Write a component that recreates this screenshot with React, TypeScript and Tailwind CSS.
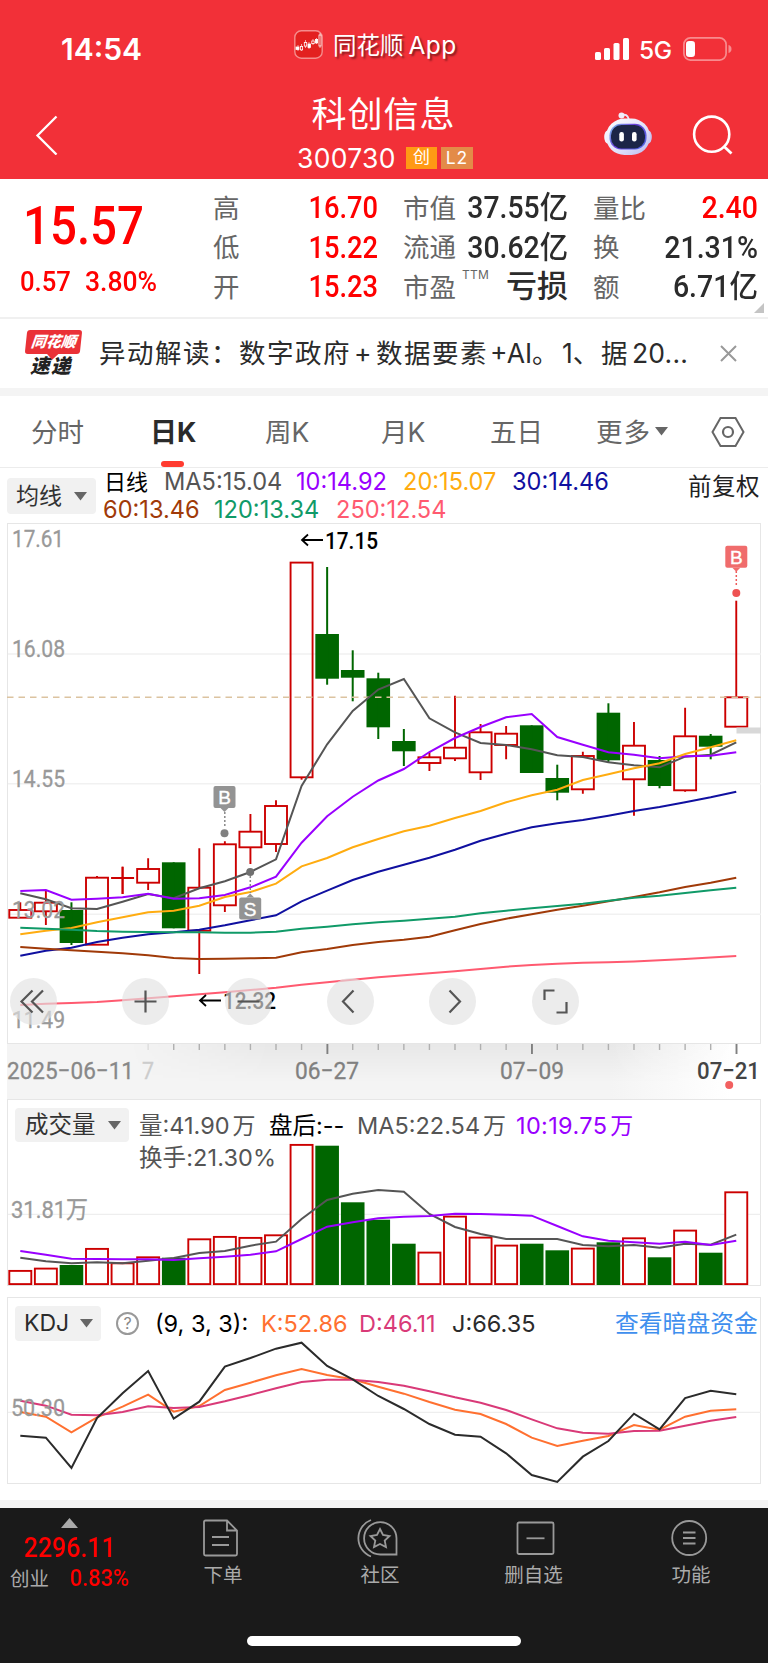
import React from "react";

const RED = "#cc0000";
const GREEN = "#006600";
const ui = "font-['Inter','Noto_Sans_CJK_SC',sans-serif]";
const num = "font-['Roboto','Noto_Sans_CJK_SC',sans-serif]";
const SVG_NUM = "Roboto, 'Noto Sans CJK SC', sans-serif";

const STEP = 25.57;
const cx = (i: number) => 20.3 + STEP * i;

/* colour, body top, body bottom, wick top, wick bottom */
type Candle = ["r" | "g", number, number, number, number];
const candles: Candle[] = [
  ["r", 910, 917.7, 902.3, 917.7],
  ["r", 902.7, 911.3, 890, 925],
  ["g", 910, 943, 902.3, 945],
  ["r", 877.7, 944.7, 876, 944.7],
  ["r", 878, 878, 866.7, 894],
  ["r", 869, 882.7, 858.3, 890],
  ["g", 862.3, 928.3, 862.3, 928.3],
  ["r", 887.7, 930.7, 848.3, 974],
  ["r", 844.3, 905.3, 841.3, 912],
  ["r", 831.7, 847.3, 814, 864],
  ["r", 806, 844, 800.3, 852],
  ["r", 562.6, 777.3, 562.6, 779.7],
  ["g", 634, 678.7, 567, 684.7],
  ["g", 670, 677.7, 650.3, 701.3],
  ["g", 678.3, 727.3, 672.7, 739],
  ["g", 741, 751.3, 729, 766],
  ["r", 757.3, 763, 752.3, 771],
  ["r", 747.7, 758.3, 695.7, 761],
  ["r", 732.3, 772.3, 724, 780],
  ["r", 733.7, 745, 726, 759.3],
  ["g", 725.3, 773, 725.3, 773],
  ["g", 778, 792.7, 764.7, 800.3],
  ["r", 756, 789.3, 751.7, 793.7],
  ["g", 712.7, 760.3, 703.3, 763],
  ["r", 745.7, 779.3, 722, 815.7],
  ["g", 760, 786, 756, 788.3],
  ["r", 736.3, 790.3, 707.7, 791.7],
  ["g", 735.7, 746.7, 734, 759.3],
  ["r", 697.3, 726.7, 600.7, 726.7],
];

const averages: { color: string; y: number[] }[] = [
  { color: "#555555", y: [893.3, 899.3, 908.3, 909, 901.7, 894, 898.3, 888.3, 881.3, 872, 859.3, 786, 744.3, 711, 689.5, 679, 718.3, 732.3, 743, 745, 749.3, 755.3, 757, 762.3, 765.3, 767.3, 756.7, 754.7, 742.3] },
  { color: "#9900ff", y: [891, 890, 899.7, 898.7, 897.3, 893.7, 898.7, 898.3, 895, 887.3, 876.7, 842.7, 816.3, 796.7, 780.5, 769, 752, 738, 727, 717.3, 714, 737, 744.7, 752.3, 754.7, 758.3, 756.3, 755.7, 752.3] },
  { color: "#ffac10", y: [934.3, 930.7, 928, 922.3, 917.3, 912.3, 910.7, 905.7, 897, 892, 883.7, 866.3, 858, 847.3, 839, 831.3, 825.7, 818, 811, 802.3, 795.3, 789.7, 780, 774.3, 768.3, 763.3, 754, 747.3, 740.3] },
  { color: "#1010a0", y: [955.7, 950.7, 947.7, 942, 937.7, 934.3, 932.3, 929.7, 925.3, 920.3, 915.3, 901.3, 890.7, 880, 871.7, 864.7, 857.7, 849.7, 840.7, 833.7, 827.3, 823.3, 820, 815.7, 811, 807, 802.3, 797.3, 791.7] },
  { color: "#a03a08", y: [947, 948.7, 950.3, 951.7, 953.3, 955.3, 958, 959, 958.7, 958.3, 957.7, 952.3, 949, 945, 942, 939.7, 936.7, 930.3, 924, 918.7, 914.3, 909.7, 905.7, 901.3, 897, 892.3, 887, 882.7, 877.7] },
  { color: "#109a68", y: [927.7, 928.7, 929.7, 931, 931.7, 932, 932.3, 932.3, 932.7, 932.7, 931.7, 928.7, 926.7, 924.3, 922.3, 920.7, 918.7, 916.7, 913.3, 910.7, 908.3, 906, 903.7, 900.7, 897.7, 895.7, 893, 890.3, 887.7] },
  { color: "#ff5a70", y: [1005, 1003.8, 1003, 1002, 1000.2, 998.3, 996.3, 994.3, 992.2, 990, 987.7, 984.8, 982.3, 979.8, 977.3, 975.3, 973.3, 971.3, 969, 966.7, 965, 963.8, 962.7, 962.3, 961.5, 960.3, 959, 957.5, 956] },
];

const volumes: ["r" | "g", number][] = [
  ["r", 1270.3], ["r", 1268], ["g", 1265], ["r", 1248.3], ["r", 1262.7], ["r", 1256.7], ["g", 1257.7], ["r", 1238.7],
  ["r", 1236.3], ["r", 1237.3], ["r", 1234.7], ["r", 1144.3], ["g", 1145.7], ["g", 1202.3], ["g", 1219.7], ["g", 1243.7],
  ["r", 1252], ["r", 1216], ["r", 1237], ["r", 1245], ["g", 1243.7], ["g", 1250.3], ["r", 1248], ["g", 1242.3],
  ["r", 1237.7], ["g", 1257.3], ["r", 1230], ["g", 1252.7], ["r", 1191.7],
];
const volMa5 = [503, 514, 520, 517, 520, 512, 504, 489, 483, 467, 455, 387, 330, 311, 300, 305, 372, 411, 432, 447, 447, 447, 465, 469, 465, 473, 461, 464, 434];
const volMa10 = [483, 494, 506, 507, 508, 508, 510, 505, 500, 494, 484, 447, 410, 397, 385, 380, 378, 371, 372, 374, 377, 408, 439, 452, 457, 461, 455, 465, 452];

const kLine = [366, 380, 427, 382, 350, 314, 365, 348, 300, 278, 256, 237, 255, 268, 290, 311, 336, 359, 372, 402, 443, 468, 452, 438, 405, 419, 380, 362, 358];
const dLine = [332, 347, 374, 376, 366, 349, 354, 351, 334, 315, 295, 276, 269, 269, 276, 287, 304, 322, 338, 360, 388, 415, 428, 431, 423, 422, 407, 392, 381];
const jLine = [437, 443, 534, 384, 310, 243, 386, 335, 230, 204, 176, 158, 228, 268, 318, 357, 402, 434, 440, 490, 555, 576, 500, 453, 371, 418, 324, 302, 313];

/* series stored in thirds of a pixel below an origin */
const thirds = (origin: number, v: number[]) => v.map((n) => origin + n / 3);

function Line({ y, color, w = 2 }: { y: number[]; color: string; w?: number }) {
  return <polyline points={y.map((v, i) => `${cx(i)},${v}`).join(" ")} fill="none" stroke={color} strokeWidth={w} />;
}

function Label({ x, y, w, children, fill = "#999", weight = 400, size = 24 }: { x: number; y: number; w: number; children: string; fill?: string; weight?: number; size?: number }) {
  return (
    <text x={x} y={y} textLength={w} lengthAdjust="spacingAndGlyphs" fontFamily={SVG_NUM} fontSize={size} fontWeight={weight} fill={fill} stroke={fill} strokeWidth={weight > 400 ? 0 : 0.3}>
      {children}
    </text>
  );
}

function Flag({ x, y, letter, color, up }: { x: number; y: number; letter: string; color: string; up?: boolean }) {
  return (
    <g>
      <rect x={x - 11} y={y} width="22" height="22" rx="2" fill={color} />
      <path d={up ? `M${x - 4} ${y}L${x} ${y - 4}L${x + 4} ${y}Z` : `M${x - 4} ${y + 22}L${x} ${y + 26}L${x + 4} ${y + 22}Z`} fill={color} />
      <text x={x} y={y + 18} textAnchor="middle" fontFamily="Liberation Sans, sans-serif" fontSize="19" fill="#fff" stroke="#fff" strokeWidth="0.4">
        {letter}
      </text>
    </g>
  );
}

function Caret() {
  return (
    <svg width="13" height="9" viewBox="0 0 13 9" className="shrink-0">
      <path d="M0 0H13L6.5 8.6Z" fill="#666" />
    </svg>
  );
}

function StatusBar() {
  return (
    <div className="flex h-[90px] items-start text-white">
      <div className={`${ui} ml-[61px] mt-[31px] w-[233px] text-[30px] font-semibold leading-9`}>14:54</div>
      <svg className="mt-[30px]" width="29" height="29" viewBox="0 0 29 29">
        <rect x="0.8" y="0.8" width="27.4" height="27.4" rx="6.5" fill="#e3201f" stroke="#f58c8c" strokeWidth="1.4" />
        <g stroke="#fff" strokeWidth="0.8">
          <path d="M4 15V21M7.5 14V21M11.5 10V18M15 12V19M19 9V15M22.5 8V14M26 3V18" strokeWidth="0.6" />
          <rect x="2" y="17" width="3" height="2.5" fill="#fff" />
          <rect x="6.4" y="16.5" width="2.2" height="3.4" fill="#e3201f" />
          <rect x="10.3" y="12.5" width="2.4" height="3.6" fill="#e3201f" />
          <rect x="14" y="14" width="2.4" height="3.4" fill="#fff" />
          <rect x="17.8" y="11" width="2.4" height="2.6" fill="#e3201f" />
          <rect x="21.4" y="9.5" width="2.2" height="3.4" fill="#fff" />
          <rect x="25" y="5" width="2" height="11" fill="#e3201f" />
        </g>
      </svg>
      <div className={`${ui} ml-[10px] mt-[29px] flex w-[262px] items-baseline whitespace-nowrap text-[23.5px] leading-8 [text-shadow:2px_2px_2px_rgba(0,0,0,0.45)]`}>
        同花顺<span className="ml-[5px] text-[24.5px] tracking-[0.4px]">App</span>
      </div>
      <svg className="mt-[38px]" width="34" height="22" viewBox="0 0 34 22" fill="#fff">
        <rect x="0" y="14" width="6" height="8" rx="1.6" />
        <rect x="9" y="10" width="6" height="12" rx="1.6" />
        <rect x="18.5" y="5" width="6" height="17" rx="1.6" />
        <rect x="28" y="0" width="6" height="22" rx="1.6" />
      </svg>
      <div className={`${ui} ml-[10px] mt-[34px] w-[44px] text-[24.5px] font-medium leading-8 tracking-[-0.5px]`}>5G</div>
      <svg className="mt-[37px]" width="49" height="24" viewBox="0 0 49 24">
        <rect x="0.9" y="0.9" width="42.2" height="22.2" rx="6.5" fill="none" stroke="#f88b8e" strokeWidth="1.7" />
        <rect x="3" y="4" width="9" height="16" rx="3.2" fill="#fff" />
        <path d="M45.5 8C49.5 8.5 49.5 15.5 45.5 16Z" fill="#f88b8e" />
      </svg>
    </div>
  );
}

function TitleBar() {
  return (
    <div className="flex h-[89px] items-start text-white">
      <svg className="ml-[35px] mt-[25px]" width="24" height="40" viewBox="0 0 24 40">
        <path d="M21.5 1.5L2.5 20.5L21.5 39.5" fill="none" stroke="#fff" strokeWidth="2.3" />
      </svg>
      <div className="ml-[220px] flex w-[220px] flex-col items-center">
        <div className={`${ui} -ml-[11px] whitespace-nowrap text-[35px] leading-[48px] tracking-[1px]`}>科创信息</div>
        <div className="flex h-[26px] w-full items-center pl-[18px] pt-[13px]">
          <span className={`${ui} w-[109px] text-[26.5px] leading-[26px] tracking-[0.3px]`}>300730</span>
          <span className={`${ui} mr-1 flex h-[22px] w-[31px] items-center justify-center bg-[#ff9914] text-[17px] leading-none`}>创</span>
          <span className={`${ui} flex h-[22px] w-8 items-center justify-center bg-[#e38b48] text-[17.5px] leading-none tracking-[1px]`}>L2</span>
        </div>
      </div>
      <svg className="ml-[105px] mt-[21px]" width="48" height="46" viewBox="0 0 48 46">
        <defs>
          <linearGradient id="shell" x1="0" y1="0" x2="1" y2="1">
            <stop offset="0" stopColor="#ffffff" />
            <stop offset="0.6" stopColor="#dfe0fa" />
            <stop offset="1" stopColor="#b9b8ee" />
          </linearGradient>
          <linearGradient id="visor" x1="0" y1="0" x2="1" y2="0.6">
            <stop offset="0" stopColor="#7fc8f0" />
            <stop offset="0.5" stopColor="#6a3fd8" />
            <stop offset="1" stopColor="#5560e0" />
          </linearGradient>
        </defs>
        <path d="M17 4.5C21 2.5 24 4 25 9" fill="none" stroke="#e9e6fa" strokeWidth="2" />
        <circle cx="17.5" cy="4.5" r="3" fill="#f1eefb" />
        <ellipse cx="3.5" cy="26" rx="3.3" ry="6.5" fill="#f5f2fd" />
        <ellipse cx="44.5" cy="26" rx="3.3" ry="6.5" fill="#c9c6f2" />
        <rect x="2" y="7.5" width="44" height="36.5" rx="18.5" fill="url(#shell)" />
        <rect x="5.5" y="12.8" width="37" height="25.6" rx="11.5" fill="url(#visor)" />
        <rect x="7" y="14" width="34" height="23.4" rx="10.5" fill="#1c2547" />
        <rect x="15.3" y="21" width="4.6" height="9.5" rx="2.2" fill="#fff" />
        <rect x="28" y="21" width="4.6" height="9.5" rx="2.2" fill="#fff" />
      </svg>
      <svg className="ml-[40px] mt-[25px]" width="42" height="42" viewBox="0 0 42 42">
        <circle cx="19.7" cy="19.2" r="17.6" fill="none" stroke="#fff" strokeWidth="2.6" />
        <path d="M31.5 31L39.5 38.5" stroke="#fff" strokeWidth="2.8" />
      </svg>
    </div>
  );
}

function Quote() {
  const rows = [
    { a: "高", av: "16.70", b: "市值", bv: "37.55亿", c: "量比", cv: "2.40", red: true },
    { a: "低", av: "15.22", b: "流通", bv: "30.62亿", c: "换", cv: "21.31%", red: false },
    { a: "开", av: "15.23", b: "市盈", bv: "亏损", c: "额", cv: "6.71亿", red: false },
  ];
  const label = `${ui} whitespace-nowrap text-[26.5px] leading-none text-[#666]`;
  const value = `${num} origin-right whitespace-nowrap text-right text-[31px] font-medium leading-none`;
  return (
    <section className="relative flex h-[138px] bg-white">
      <div className={`${num} w-[213px] font-medium text-[#ff0000]`}>
        <div className="ml-[23px] mt-[14px] w-[150px] origin-left scale-x-[0.87] text-[54.5px] leading-[64px]">15.57</div>
        <div className="ml-[20px] mt-[9px] flex text-[28.5px] leading-8">
          <span className="w-[65px] origin-left scale-x-[0.9]">0.57</span>
          <span className="origin-left scale-x-[0.93]">3.80%</span>
        </div>
      </div>
      <div className="w-[546px] pt-[9px]">
        {rows.map((r) => (
          <div key={r.a} className="flex h-[39.5px] items-center">
            <span className={`${label} w-[74px]`}>{r.a}</span>
            <span className={`${value} w-[91px] scale-x-[0.88] text-[#ff0000]`}>{r.av}</span>
            <span className={`${label} ml-[25px] flex w-[50px]`}>
              {r.b}
              {r.b === "市盈" && <span className="-mt-[5px] ml-[6px] text-[12px] leading-none tracking-[0.3px]">TTM</span>}
            </span>
            <span className={`${value} w-[115px] text-[#2b2b2b] ${r.bv === "亏损" ? "scale-x-100" : "scale-x-[0.915]"}`}>{r.bv}</span>
            <span className={`${label} ml-[25px] w-[54px]`}>{r.c}</span>
            <span className={`${value} w-[111px] scale-x-[0.92] ${r.red ? "text-[#ff0000]" : "text-[#2b2b2b]"}`}>{r.cv}</span>
          </div>
        ))}
      </div>
      <svg className="absolute bottom-[4px] right-[4px]" width="10" height="10" viewBox="0 0 10 10">
        <path d="M10 0V10H0Z" fill="#c4c4c4" />
      </svg>
    </section>
  );
}

function News() {
  return (
    <section className="flex h-[71px] items-center border-t-2 border-[#f0f0f0] bg-white">
      <div className={`${ui} ml-[24px] mt-[1px] w-[75px]`}>
        <div className="relative ml-0.5 h-6 w-[55px] -skew-x-6 rounded-[3px] bg-[#ea3137] text-center text-[15px] font-black italic leading-[23px] text-white">
          同花顺
          <span className="absolute left-[24px] top-[20px] h-2 w-2 rotate-45 bg-[#ea3137]" />
        </div>
        <div className="ml-[6px] mt-[1px] text-[19.5px] font-black italic leading-[23px] tracking-[1.5px] text-[#222]">速递</div>
      </div>
      <div className={`${ui} -mt-[1px] flex w-[619px] whitespace-nowrap text-[26.5px] leading-none tracking-[1.5px] text-[#2b2b2b]`}>
        <span className="w-[140px]">异动解读：</span>
        <span className="w-[115px]">数字政府</span>
        <span className="w-[22px]">+</span>
        <span className="w-[114px]">数据要素</span>
        <span className="w-[72px] tracking-[0px]">+AI。</span>
        <span className="w-[39px] tracking-[0px]">1、</span>
        <span className="w-[31px]">据</span>
        <span className="tracking-[0.2px]">20...</span>
      </div>
      <svg className="-mt-[1px] ml-[2px]" width="17" height="17" viewBox="0 0 17 17">
        <path d="M1 1L16 16M16 1L1 16" stroke="#999" strokeWidth="2" />
      </svg>
    </section>
  );
}

function Tabs() {
  const tab = `${ui} whitespace-nowrap text-[26.5px] leading-none text-[#666] pt-[2px]`;
  return (
    <nav className="flex h-[72px] items-center border-b border-[#ececec] bg-white">
      <span className={`${tab} ml-[31px] w-[119px]`}>分时</span>
      <span className={`${ui} relative flex h-full w-[115px] items-center whitespace-nowrap pt-[2px] text-[27px] font-bold leading-none text-[#2b2b2b]`}>
        日K
        <span className="absolute bottom-0 left-[11px] h-[6px] w-[23px] rounded-[3px] bg-[#ff3b30]" />
      </span>
      <span className={`${tab} w-[116px]`}>周K</span>
      <span className={`${tab} w-[109px]`}>月K</span>
      <span className={`${tab} w-[106px]`}>五日</span>
      <span className={`${tab} w-[59px] tracking-[1px]`}>更多</span>
      <Caret />
      <svg className="ml-[43px]" width="34" height="32" viewBox="0 0 34 32" fill="none" stroke="#666" strokeWidth="2">
        <path d="M9.5 2H24.5L32.5 16L24.5 30H9.5L1.5 16Z" />
        <circle cx="17" cy="16" r="5" strokeWidth="2.2" />
      </svg>
    </nav>
  );
}

function AverageLegend() {
  return (
    <div className={`${ui} flex h-[55px] bg-white text-[23.6px] leading-[26px]`}>
      <div className="ml-[7px] mt-[10px] flex h-[36px] w-[89px] items-center rounded-[4px] bg-[#f1f1f1] pl-[9px] text-[23px] text-[#333]">
        <span className="w-[58px]">均线</span>
        <Caret />
      </div>
      <div className="ml-[7px] w-[581px] pt-[1px]">
        <div className="flex h-[27.5px] whitespace-nowrap">
          <span className="ml-[1px] w-[60px] text-[22px] text-black">日线</span>
          <span className="w-[132px] text-[#555]">MA5:15.04</span>
          <span className="w-[107px] text-[#9900ff]">10:14.92</span>
          <span className="w-[109px] text-[#ffac10]">20:15.07</span>
          <span className="text-[#1010a0]">30:14.46</span>
        </div>
        <div className="flex whitespace-nowrap">
          <span className="w-[111px] text-[#a03a08]">60:13.46</span>
          <span className="w-[122px] text-[#109a68]">120:13.34</span>
          <span className="text-[#ff5a70]">250:12.54</span>
        </div>
      </div>
      <div className="ml-[4px] mt-[6px] whitespace-nowrap text-[23.5px] tracking-[0.5px] text-[#222]">前复权</div>
    </div>
  );
}

function RoundButton({ left, d }: { left: string; d: string }) {
  return (
    <button className={`absolute top-[455px] h-[47px] w-[47px] rounded-full bg-[#e2e2e2]/65 ${left}`}>
      <svg width="47" height="47" viewBox="0 0 47 47">
        <path d={d} fill="none" stroke="#555" strokeWidth="2.2" />
      </svg>
    </button>
  );
}

function CandleChart() {
  return (
    <div className="relative h-[576px] bg-white">
      <svg className="block" width="768" height="576" viewBox="0 523 768 576">
        <defs>
          <linearGradient id="band" x1="0" y1="0" x2="1" y2="0">
            <stop offset="0" stopColor="#f4f4f4" />
            <stop offset="0.8" stopColor="#f4f4f4" />
            <stop offset="0.96" stopColor="#ffffff" />
          </linearGradient>
          <linearGradient id="shade" x1="0" y1="0" x2="0" y2="1">
            <stop offset="0" stopColor="#000" stopOpacity="0.05" />
            <stop offset="1" stopColor="#000" stopOpacity="0" />
          </linearGradient>
          <linearGradient id="fade" x1="0" y1="0" x2="1" y2="0">
            <stop offset="0.16" stopColor="#fff" stopOpacity="0" />
            <stop offset="0.35" stopColor="#fff" />
            <stop offset="0.8" stopColor="#fff" />
            <stop offset="0.98" stopColor="#fff" stopOpacity="0" />
          </linearGradient>
          <mask id="fadeMask">
            <rect x="7" y="1043" width="754" height="56" fill="url(#fade)" />
          </mask>
        </defs>
        <rect x="7" y="1043" width="754" height="56" fill="url(#band)" />
        <rect x="7" y="1043" width="754" height="40" fill="url(#shade)" mask="url(#fadeMask)" />
        <rect x="7.5" y="523.5" width="753" height="520" fill="#fff" stroke="#e6e6e6" />
        <path d="M8 654H761M8 783.7H761M8 914.3H761" stroke="#f1f1f1" strokeWidth="1.5" />
        {candles.map(([c, top, bottom, hi, lo], i) => {
          const x = cx(i);
          if (c === "g")
            return (
              <g key={i} fill={GREEN}>
                <rect x={x - 11.8} y={top} width="23.6" height={bottom - top} />
                <rect x={x - 1} y={hi} width="2" height={lo - hi} />
              </g>
            );
          return (
            <g key={i} stroke={RED} strokeWidth="1.9" fill="none">
              {bottom - top > 1 ? <rect x={x - 11} y={top} width="22" height={bottom - top} /> : <path d={`M${x - 11.5} ${top}H${x + 11.5}M${x} ${hi}V${lo}`} />}
              <path d={`M${x} ${hi}V${top}M${x} ${bottom}V${lo}`} />
            </g>
          );
        })}
        <path d="M7 697.3H761" stroke="#dcc3a0" strokeWidth="1.4" strokeDasharray="6.5 5" />
        <rect x="736.5" y="727.5" width="24.5" height="6" fill="#d8d8d8" />
        {averages.map((a) => (
          <Line key={a.color} y={a.y} color={a.color} />
        ))}
        <Label x={12} y={547} w={52}>17.61</Label>
        <Label x={12} y={657} w={53}>16.08</Label>
        <Label x={12} y={787} w={53}>14.55</Label>
        <Label x={12} y={917.5} w={53}>13.02</Label>
        <Label x={12} y={1028} w={53}>11.49</Label>
        <path d="M323 540H303M308 534.5L302 540L308 545.5" fill="none" stroke="#000" strokeWidth="1.8" />
        <Label x={325} y={548.5} w={53} fill="#000" weight={500}>17.15</Label>
        <path d="M221 1000.5H201M206 995L200 1000.5L206 1006" fill="none" stroke="#000" strokeWidth="1.8" />
        <Label x={223} y={1009} w={53} fill="#000" weight={500}>12.32</Label>
        <path d="M224.8 812V826" stroke="#888" strokeWidth="1.5" strokeDasharray="2 2" />
        <circle cx="224.5" cy="833.3" r="4" fill="#808080" />
        <Flag x={224.5} y={786} letter="B" color="#939393" />
        <path d="M250.3 876V893" stroke="#888" strokeWidth="1.5" strokeDasharray="2 2" />
        <circle cx="250.2" cy="872" r="4" fill="#707070" />
        <Flag x={250.2} y={897.5} letter="S" color="#939393" up />
        <path d="M736.3 571V586" stroke="#ee5a5a" strokeWidth="1.5" strokeDasharray="2 2" />
        <circle cx="736.3" cy="593" r="4" fill="#ee5252" />
        <Flag x={736.3} y={545.7} letter="B" color="#f06c6c" />
        {Array.from({ length: 24 }, (_, k) => k + 5).map((i) => {
          const major = i === 12 || i === 20 || i === 28;
          return <rect key={i} x={cx(i) - 0.7} y="1044" width={major ? 1.9 : 1.4} height={major ? 10 : 6} fill={i === 5 ? "#ddd" : major ? "#808080" : "#b0b0b0"} />;
        })}
        <Label x={7} y={1079} w={127} fill="#888" size={24.5}>2025−06−11</Label>
        <Label x={142} y={1079} w={12} fill="#ccc">7</Label>
        <Label x={295} y={1079} w={64} fill="#808080" size={24.5}>06−27</Label>
        <Label x={500} y={1079} w={64} fill="#808080" size={24.5}>07−09</Label>
        <Label x={697} y={1079} w={63} fill="#444" weight={500} size={24.5}>07−21</Label>
        <circle cx="729.2" cy="1085" r="4" fill="#f26060" />
      </svg>
      <RoundButton left="left-[10px]" d="M22.5 12.5L11.5 23.5L22.5 34.5M33 12.5L22 23.5L33 34.5" />
      <RoundButton left="left-[122px]" d="M12.5 23.5H34.5M23.5 12.5V34.5" />
      <RoundButton left="left-[225px]" d="M12.5 23.5H34.5" />
      <RoundButton left="left-[327px]" d="M26.5 12.5L16 23.5L26.5 34.5" />
      <RoundButton left="left-[429px]" d="M20.5 12.5L31 23.5L20.5 34.5" />
      <RoundButton left="left-[532px]" d="M12.5 22V12.5H22.5M34.5 24V34.5H24.5" />
    </div>
  );
}

function VolumePanel() {
  const wan = "ml-[3px] text-[23px]";
  return (
    <section className="relative h-[187px] bg-white">
      <svg className="block" width="768" height="187" viewBox="0 1099 768 187">
        <rect x="7.5" y="1099.5" width="753" height="186" fill="#fff" stroke="#e6e6e6" />
        <path d="M8 1214.3H761" stroke="#eaeaea" />
        {volumes.map(([c, top], i) =>
          c === "g" ? (
            <rect key={i} x={cx(i) - 11.8} y={top} width="23.6" height={1285 - top} fill={GREEN} />
          ) : (
            <rect key={i} x={cx(i) - 11} y={top + 0.6} width="22" height={1283.5 - top} fill="#fff" stroke={RED} strokeWidth="1.9" />
          ),
        )}
        <Line y={thirds(1090, volMa5)} color="#555" />
        <Line y={thirds(1090, volMa10)} color="#9900ff" />
        <Label x={11} y={1218} w={77}>31.81万</Label>
      </svg>
      <div className={`${ui} absolute left-0 top-0 flex w-full whitespace-nowrap text-[23.5px] leading-[30px] text-[#555]`}>
        <div className="ml-[15px] mt-[9px] flex h-[34px] w-[114px] items-center rounded-[4px] bg-[#f1f1f1] pl-[10px] text-[#333]">
          <span className="w-[83px]">成交量</span>
          <Caret />
        </div>
        <div className="ml-[10px] mt-[12px]">
          <div className="flex">
            <span className="w-[130px]">量:41.90<span className={wan}>万</span></span>
            <span className="w-[88px] text-black">盘后:--</span>
            <span className="w-[159px]">MA5:22.54<span className={wan}>万</span></span>
            <span className="tracking-[0.35px] text-[#9900ff]">10:19.75<span className={wan}>万</span></span>
          </div>
          <div className="mt-[2px] tracking-[0.1px]">换手:21.30%</div>
        </div>
      </div>
    </section>
  );
}

function KdjPanel() {
  return (
    <section className="relative mt-[11px] h-[187px] bg-white">
      <svg className="block" width="768" height="187" viewBox="0 1297 768 187">
        <rect x="7.5" y="1297.5" width="753" height="186" fill="#fff" stroke="#e6e6e6" />
        <path d="M8 1412.3H761" stroke="#eaeaea" />
        <Line y={thirds(1290, kLine)} color="#ff7030" />
        <Line y={thirds(1290, dLine)} color="#d93a78" />
        <Line y={thirds(1290, jLine)} color="#2b2b2b" />
        <Label x={11} y={1416} w={54}>50.30</Label>
      </svg>
      <div className={`${ui} absolute left-0 top-0 flex h-[54px] w-full items-center whitespace-nowrap text-[23.5px] leading-none text-[#2b2b2b]`}>
        <div className="-mt-[2px] ml-[15px] flex h-[35px] w-[86px] items-center rounded-[4px] bg-[#f1f1f1] pl-[9px]">
          <span className="w-[56px] text-[23px]">KDJ</span>
          <Caret />
        </div>
        <div className="-mt-[2px] ml-[15px] flex h-[23px] w-[23px] items-center justify-center rounded-full border-2 border-[#999] text-[16px] text-[#888]">?</div>
        <span className="ml-[16px] w-[106px] text-black">(9, 3, 3):</span>
        <span className="w-[98px] text-[#ff7030]">K:52.86</span>
        <span className="w-[93px] text-[#d93a78]">D:46.11</span>
        <span className="w-[163px]">J:66.35</span>
        <span className="text-[23.8px] text-[#3f8fee]">查看暗盘资金</span>
      </div>
    </section>
  );
}

function NavItem({ label, shift, children }: { label: string; shift?: string; children: React.ReactNode }) {
  return (
    <div className={`${ui} flex w-[156px] flex-col items-center text-[19.5px] leading-none text-[#aaa]`}>
      <svg className="mt-[8px]" width="44" height="44" viewBox="0 0 44 44" fill="none" stroke="#999" strokeWidth="1.8">
        {children}
      </svg>
      <span className={`mt-[6px] ${shift ?? ""}`}>{label}</span>
    </div>
  );
}

function BottomBar() {
  return (
    <footer className="flex h-[155px] flex-col items-center bg-[#1a1a1a]">
      <div className="flex h-[128px] w-full">
        <div className={`${num} w-[144px] text-[#ff0000]`}>
          <svg className="ml-[61px] mt-[10px]" width="17" height="10" viewBox="0 0 17 10">
            <path d="M8.5 0L17 10H0Z" fill="#aaa" />
          </svg>
          <div className="ml-[24px] mt-[5px] origin-left scale-x-[0.89] text-[28px] font-medium leading-[30px]">2296.11</div>
          <div className="mt-[4px] flex items-center pl-[10px]">
            <span className={`${ui} w-[60px] text-[19.5px] leading-6 text-[#aaa]`}>创业</span>
            <span className="origin-left scale-x-[0.95] text-[23px] font-medium leading-6">0.83%</span>
          </div>
        </div>
        <NavItem label="下单" shift="ml-[2px]">
          <path d="M24 4.5H5.5Q4 4.5 4 6V38Q4 39.5 5.5 39.5H35.5Q37 39.5 37 38V14.5L27 4.5H24M27 4.5V14.5H37M12 21H29M12 29H29" />
        </NavItem>
        <NavItem label="社区" shift="ml-[4px]">
          <path d="M40.5 38.5H24.5A16.2 16.2 0 1 1 40.5 22.3Z" />
          <path d="M15 40.5A19.5 19.5 0 0 1 15 4" />
          <path d="M24 13L27 19L33.5 20L28.7 24.5L30 31L24 28L18 31L19.3 24.5L14.5 20L21 19Z" />
        </NavItem>
        <NavItem label="删自选" shift="-ml-[1px]">
          <rect x="5.5" y="6.5" width="36" height="31.5" rx="1.5" />
          <path d="M14.5 22.3H32.5" />
        </NavItem>
        <NavItem label="功能" shift="ml-[2px]">
          <circle cx="21.2" cy="22" r="17" />
          <path d="M15 16.5H27.5M15 22H27.5M15 27.5H27.5" />
        </NavItem>
      </div>
      <div className="h-[10px] w-[274px] rounded-full bg-white" />
    </footer>
  );
}

export default function App() {
  return (
    <main className="flex h-[1663px] w-[768px] flex-col overflow-hidden bg-white">
      <header className="h-[179px] bg-[#f23038]">
        <StatusBar />
        <TitleBar />
      </header>
      <Quote />
      <News />
      <div className="h-[8px] bg-[#f4f4f4]" />
      <Tabs />
      <AverageLegend />
      <CandleChart />
      <VolumePanel />
      <KdjPanel />
      <div className="mt-[16px] h-[8px] bg-[#f4f4f4]" />
      <BottomBar />
    </main>
  );
}
